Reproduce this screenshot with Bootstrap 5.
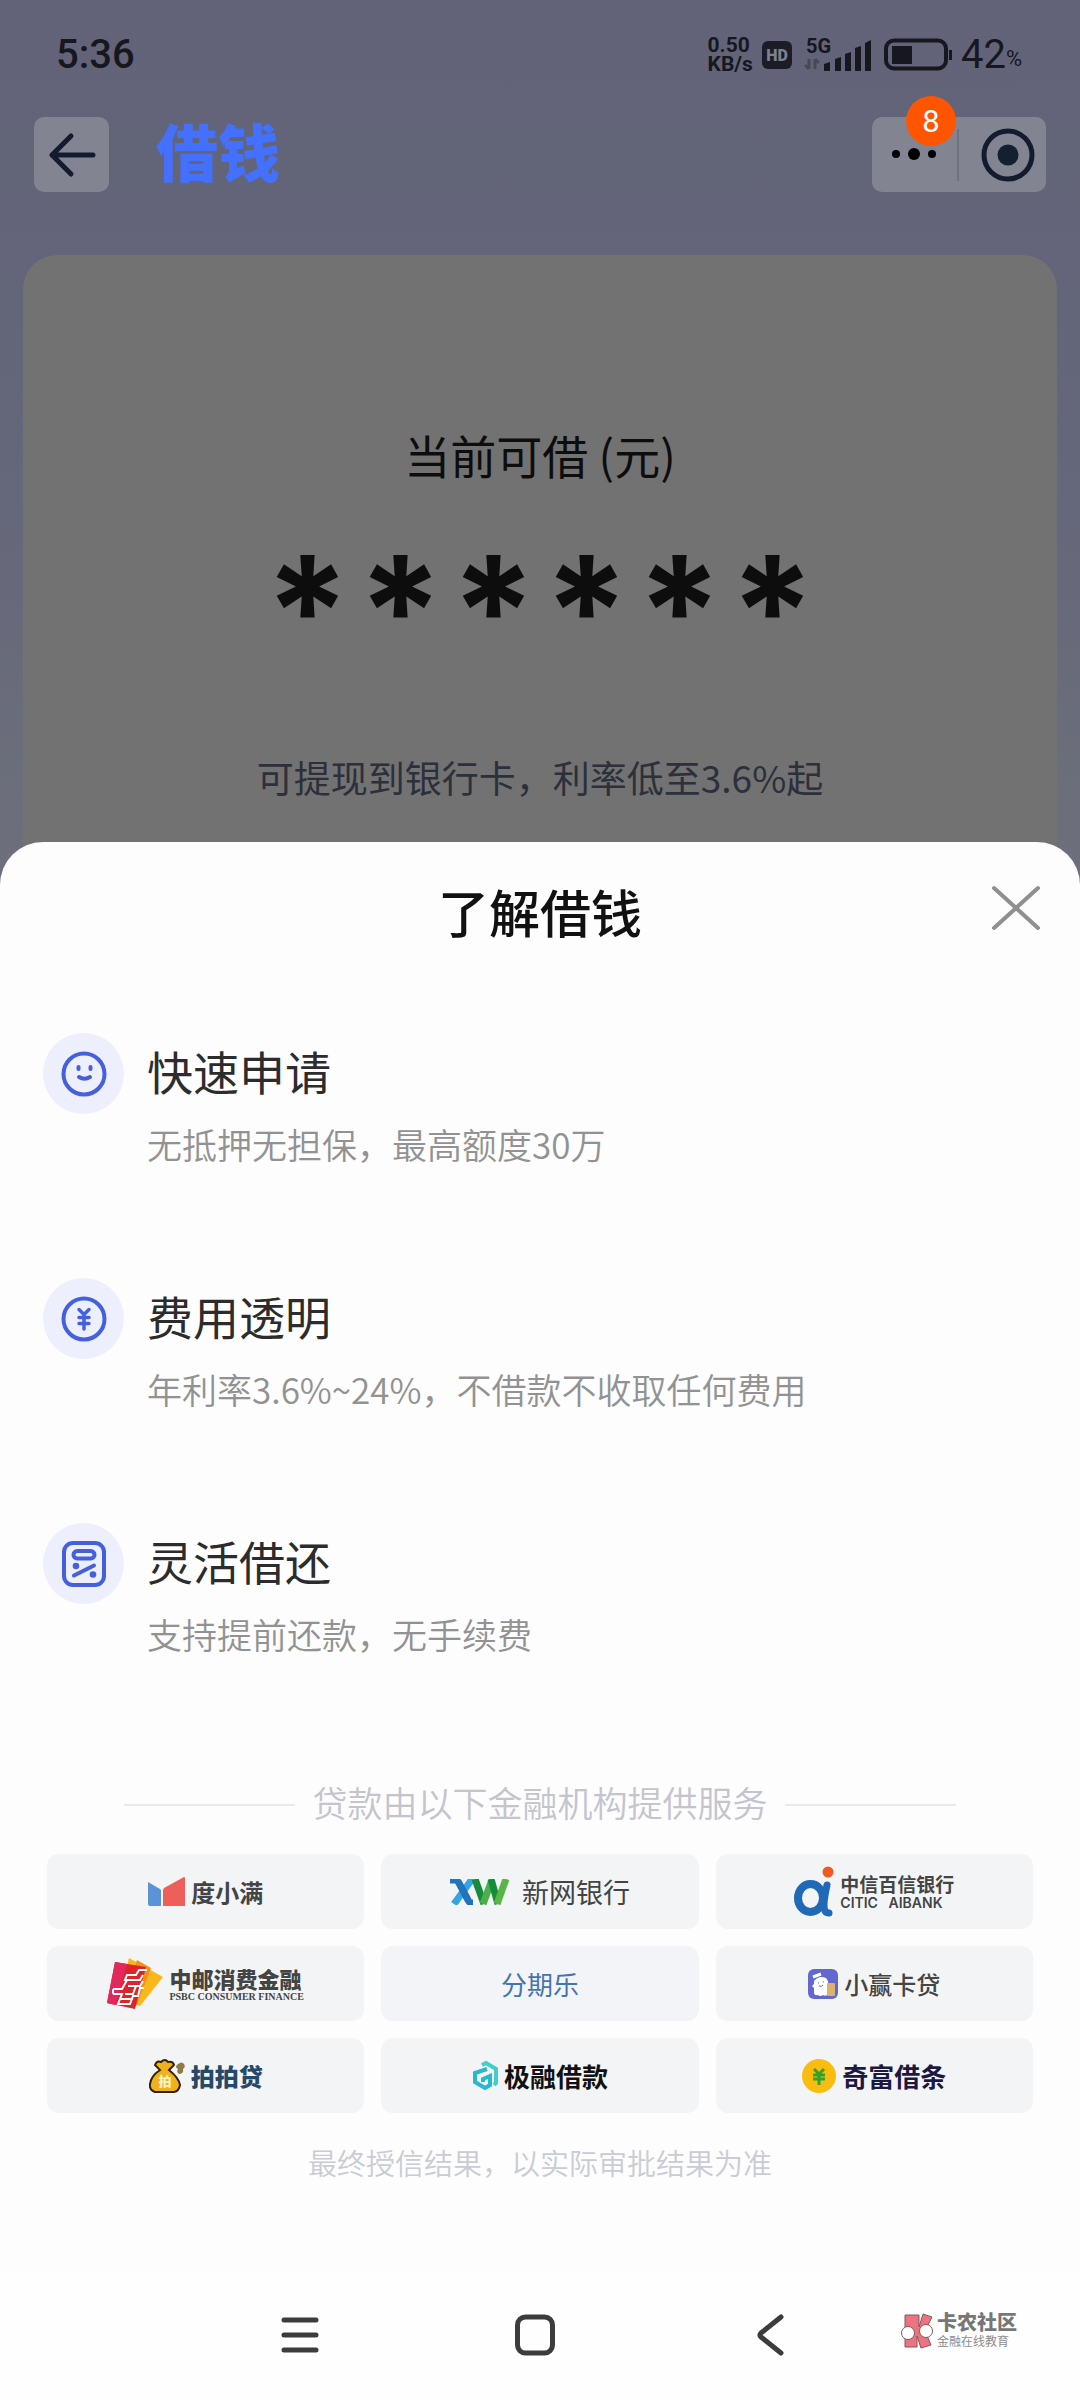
<!DOCTYPE html>
<html lang="zh-CN">
<head>
<meta charset="utf-8">
<meta name="viewport" content="width=device-width, initial-scale=1">
<title>借钱</title>
<link href="https://cdn.jsdelivr.net/npm/bootstrap@5.3.0/dist/css/bootstrap.min.css" rel="stylesheet">
<style>
  body { font-family: "Noto Sans CJK SC", "Noto Sans", sans-serif; background: #6b6e7b; color: #0d0d0d; }
  svg { display: block; flex: none; }
  .screen { min-height: 100vh; }
  .hero { background: linear-gradient(#626378, #64667a 50%, #6d707b); }
  .ink { color: #16171f; font-family: Roboto, "Noto Sans", sans-serif; }
  .statusbar { height: 86px; padding: 23px 58px 0 56px; }
  .clock { font-size: 40px; line-height: 64px; font-weight: 500; }
  .netrate { font-size: 21px; line-height: 19px; font-weight: 700; }
  .netrate span { display: block; }
  .pct { font-size: 22px; line-height: 28px; }
  .batt-num { font-size: 40px; line-height: 64px; }
  .topbar { padding: 31px 34px 0; }
  .glass { background: #828492; border: 0; border-radius: 10px; height: 75px; }
  .glass-back { width: 75px; padding: 0; }
  .glass button { background: none; border: 0; padding: 0; }
  .brand-title { font-size: 62px; line-height: 67px; padding-bottom: 8px; font-weight: 900; color: #4470ff; margin-left: 47px; }
  .split { width: 2px; height: 52px; background: #6f717f; }
  .count { position: absolute; left: 34px; top: -21px; width: 50px; height: 50px; border-radius: 50%; background: #ff5500; color: #fff; font-size: 31px; line-height: 51px; font-family: Roboto, sans-serif; }
  .quota { margin: 63px 23px 0; padding: 169px 20px 84px; border-radius: 34px 34px 0 0; background: #727272; }
  .quota-label { font-size: 46px; line-height: 60px; }
  .quota-mask { height: 268px; font-family: Inter, sans-serif; font-weight: 700; font-size: 153px; line-height: 254px; }
  .quota-mask span { width: 93px; display: flex; justify-content: center; }
  .quota-note { font-size: 37px; line-height: 50px; color: #2c303b; }
  .sheet { background: #fdfdfd; border-radius: 43px 43px 0 0; margin-top: -44px; padding: 34px 43px 0; position: relative; }
  .sheet-title { font-size: 51px; line-height: 70px; font-weight: 500; color: #111; }
  .close-btn { position: absolute; right: 39px; top: 43px; background: none; border: 0; padding: 0; }
  .feature-list { margin-top: 87px; gap: 109px; }
  .feature { gap: 23px; }
  .feature h2 { font-size: 46px; line-height: 60px; font-weight: 400; color: #2c2c2c; margin: 7px 0 19px; }
  .feature p { font-size: 35px; line-height: 50px; color: #929292; font-weight: 350; }
  .disc { width: 81px; height: 81px; border-radius: 50%; background: #eeeffc; }
  .by-line { margin-top: 118px; gap: 17px; font-size: 35px; line-height: 50px; font-weight: 350; color: #c3c4cd; }
  .by-line i { width: 171px; height: 2px; margin-top: 5px; background: #e9e9ec; }
  .partners { --bs-gutter-x: 17px; --bs-gutter-y: 17px; margin-top: 10px; }
  .tile { height: 75px; gap: 6px; border-radius: 12px; background: #f3f4f6; color: #444; text-decoration: none; line-height: 28px; font-weight: 700; }
  .t24 { font-size: 24px; }
  .t26 { font-size: 26px; }
  .t27 { font-size: 27px; }
  .tile-wide { gap: 13px; }
  .citic-cn { font-size: 19px; line-height: 22px; }
  .citic-en { font: 600 14px/16px Inter, sans-serif; white-space: pre; }
  .psbc-cn { font-size: 22px; line-height: 26px; font-weight: 900; }
  .psbc-en { font: 700 10px/12px "Liberation Serif", serif; }
  .tile-fen { background: #f2f4f8; color: #4674b0; }
  .tile-pai { color: #24496b; font-weight: 900; }
  .tile-ji { color: #111; }
  .tile-qi { color: #1d1840; }
  .final-note { margin-top: 29px; font-size: 29px; line-height: 40px; font-weight: 350; color: #c8ccd4; }
  .navkeys { height: 130px; background: #fefefe; }
  .navkeys button { background: none; border: 0; padding: 0; width: 235px; }
  .keys-pad { width: 182px; }
  .wm { gap: 3px; color: #777; margin-top: -8px; margin-right: 63px; }
  .wm b { font-size: 20px; line-height: 20px; font-weight: 900; }
  .wm span { font-size: 12px; line-height: 18px; color: #8c8c8c; }
</style>
</head>
<body>
<main class="screen d-flex flex-column">
  <div class="hero">
    <div class="statusbar ink d-flex justify-content-between align-items-start">
      <div class="clock">5:36</div>
      <div class="d-flex align-items-center">
        <div class="netrate"><span>0.50</span><span>KB/s</span></div>
        <svg class="ms-2" width="32" height="64" viewBox="0 0 32 64"><rect x="1" y="18" width="30" height="28" rx="6" fill="#1b1c25"/><text x="16" y="38" text-anchor="middle" font-size="16" font-weight="900" fill="#7e8090">HD</text></svg>
        <svg class="ms-2" width="72" height="64" viewBox="0 0 72 64" fill="#16171f"><text x="5" y="30" font-size="20" font-weight="700">5G</text><path d="M8 36v10M8 46l-4-4M14 46V36M14 36l4 4" stroke="#474957" stroke-width="3" fill="none"/><path d="M23 41l6-2v9h-6zM34 36l6-2v14h-6zM44 31l6-2v19h-6zM54 25l6-2v25h-6zM64 20l6-3v31h-6z"/></svg>
        <svg class="ms-2" width="72" height="64" viewBox="0 0 72 64"><rect x="5" y="17.500" width="60" height="28" rx="8" fill="none" stroke="#16171f" stroke-width="4"/><rect x="11" y="23" width="20" height="18" fill="#16171f"/><rect x="68" y="27" width="3" height="10" fill="#16171f"/></svg>
        <div class="d-flex align-items-center ms-2"><span class="batt-num">42</span><span class="pct pt-2">%</span></div>
      </div>
    </div>

    <header class="topbar d-flex align-items-center">
      <button type="button" class="glass glass-back d-flex align-items-center justify-content-center" aria-label="返回">
        <svg width="48" height="46" viewBox="0 0 48 46" fill="none" stroke="#141b2e" stroke-width="5" stroke-linecap="round" stroke-linejoin="round"><path d="M45 23H4M23 4L4 23l19 19"/></svg>
      </button>
      <h1 class="brand-title mb-0">借钱</h1>
      <div class="glass d-flex align-items-center ms-auto">
        <button type="button" class="position-relative" aria-label="更多">
          <svg width="85" height="75" viewBox="0 0 85 75"><circle cx="24" cy="37" r="4"/><circle cx="42" cy="37" r="6"/><circle cx="60" cy="37" r="4"/></svg>
          <span class="count">8</span>
        </button>
        <div class="split"></div>
        <button type="button" aria-label="关闭小程序">
          <svg width="87" height="75" viewBox="0 0 87 75"><circle cx="49" cy="38" r="24" fill="none" stroke="#141b2e" stroke-width="5"/><circle cx="49" cy="38" r="10.500" fill="#13202f"/></svg>
        </button>
      </div>
    </header>

    <section class="quota text-center">
      <div class="quota-label">当前可借 (元)</div>
      <div class="quota-mask d-flex justify-content-center"><span>*</span><span>*</span><span>*</span><span>*</span><span>*</span><span>*</span></div>
      <div class="quota-note">可提现到银行卡，利率低至3.6%起</div>
    </section>
  </div>

  <section class="sheet flex-grow-1">
    <div class="sheet-title text-center">了解借钱</div>
    <button type="button" class="close-btn" aria-label="关闭"><svg width="50" height="46" viewBox="0 0 50 46" stroke="#8f8f8f" stroke-width="4" stroke-linecap="round"><path d="M3 3l44 40M47 3L3 43"/></svg></button>

    <div class="feature-list d-flex flex-column">
      <div class="feature d-flex align-items-start">
        <div class="disc d-flex align-items-center justify-content-center"><svg width="48" height="48" viewBox="0 0 48 48" fill="none" stroke="#4560dc" stroke-width="4" stroke-linecap="round"><circle cx="24" cy="24" r="20.500"/><path d="M18.500 17v2M30.500 17v2M19 27q5.500 3.500 11 0"/></svg></div>
        <div><h2>快速申请</h2><p class="mb-0">无抵押无担保，最高额度30万</p></div>
      </div>
      <div class="feature d-flex align-items-start">
        <div class="disc d-flex align-items-center justify-content-center"><svg width="48" height="48" viewBox="0 0 48 48" fill="none" stroke="#4560dc" stroke-width="4" stroke-linecap="round"><circle cx="24" cy="24" r="20.500"/><path d="M19 14.500l5 5 5-5M24 20v14M19 22.500h10M19 28.500h10" stroke-width="3.500"/></svg></div>
        <div><h2>费用透明</h2><p class="mb-0">年利率3.6%~24%，不借款不收取任何费用</p></div>
      </div>
      <div class="feature d-flex align-items-start">
        <div class="disc d-flex align-items-center justify-content-center"><svg width="48" height="48" viewBox="0 0 48 48" fill="none" stroke="#4560dc" stroke-width="4" stroke-linecap="round"><rect x="4" y="3" width="40" height="42" rx="9"/><rect x="13.500" y="11" width="21" height="7.500" rx="3.700"/><path d="M14 35.500L34 25.500"/><circle cx="16" cy="26" r="3.300" fill="#4560dc" stroke="none"/><circle cx="33" cy="34.500" r="3.300" fill="#4560dc" stroke="none"/></svg></div>
        <div><h2>灵活借还</h2><p class="mb-0">支持提前还款，无手续费</p></div>
      </div>
    </div>

    <div class="by-line d-flex align-items-center justify-content-center"><i></i><span>贷款由以下金融机构提供服务</span><i></i></div>

    <div class="px-1">
    <div class="row partners">
      <div class="col-4"><a href="#" class="tile t24 d-flex align-items-center justify-content-center">
        <svg width="37" height="30" viewBox="0 0 37 30"><path d="M0 5l12 7 1 1v16H2q-2 0-2-2z" fill="#5b93d6"/><path d="M15 13l1-2L36 0q1 0 1 1v28H15z" fill="#ee5f5b"/></svg><span>度小满</span></a></div>
      <div class="col-4"><a href="#" class="tile tile-wide t27 fw-normal d-flex align-items-center justify-content-center">
        <svg width="59" height="26" viewBox="0 0 59 26" fill="none" stroke-width="7"><path d="M4 25L20 3q1-2 4-2" stroke="#35a4e4"/><path d="M0 1h5q2 0 4 3l9 17q1 3 5 3" stroke="#2273bd"/><path d="M25 0l9 25" stroke="#158c3c"/><path d="M33 25L42 1" stroke="#4cb04a"/><path d="M41 0l7 25" stroke="#158c3c"/><path d="M47 25L56 0" stroke="#5bb447"/></svg><span>新网银行</span></a></div>
      <div class="col-4"><a href="#" class="tile d-flex align-items-center justify-content-center">
        <svg width="40" height="58" viewBox="0 0 40 58" fill="none" stroke="#1f69b7" stroke-linecap="round"><ellipse cx="16.500" cy="35" rx="12.500" ry="14" stroke-width="8"/><path d="M33 22q-3 14-3 20 0 8 5 8" stroke-width="7"/><circle cx="34" cy="9" r="5.500" fill="#ee5a22" stroke="none"/></svg>
        <span><span class="d-block citic-cn">中信百信银行</span><span class="d-block citic-en">CITIC   AIBANK</span></span></a></div>

      <div class="col-4"><a href="#" class="tile d-flex align-items-center justify-content-center">
        <svg width="56" height="52" viewBox="0 0 56 52"><path d="M22 0l34 19-23 29-20-8z" fill="#f8b81c"/><path d="M30 2l14 8-14 37-14-5z" fill="#f39018"/><path d="M8 4l31 5-11 42L0 45z" fill="#dd2529"/><path d="M8 4l12 2L8 47l-8-2z" fill="#e3285e"/><path d="M40 12h-8l-3 5h-9l-2 5h15l3-5M20 22l-5 9h-9M6 36h9l-4 10h12l3-8h5l2-8h4M6 31v5M21 28h12l3-5M18 36h8l3-8M14 41h12" fill="none" stroke="#fff" stroke-width="2"/></svg>
        <span><span class="d-block psbc-cn">中邮消费金融</span><span class="d-block psbc-en">PSBC CONSUMER FINANCE</span></span></a></div>
      <div class="col-4"><a href="#" class="tile tile-fen t26 d-flex align-items-center justify-content-center fw-normal"><span>分期乐</span></a></div>
      <div class="col-4"><a href="#" class="tile t24 d-flex align-items-center justify-content-center fw-medium">
        <svg width="30" height="30" viewBox="0 0 30 30"><rect width="30" height="30" rx="6" fill="#6368d0"/><path d="M6 12q5-6 12-3 3 3 2 8v8q-2 3-5 1-3 2-5 0-4 1-4-3l0-4-2-2 2-2z" fill="#fff"/><path d="M5 8l8-3" stroke="#fff" stroke-width="3"/><rect x="19" y="14" width="8" height="13" rx="1" fill="#dcb26c"/><path d="M10 14h1M15 13h1M11 17q3 1 4-1" stroke="#6368d0" fill="none"/></svg><span>小赢卡贷</span></a></div>

      <div class="col-4"><a href="#" class="tile tile-pai t24 d-flex align-items-center justify-content-center">
        <svg width="36" height="34" viewBox="0 0 36 34"><path d="M29 5q4-3 6 0t-1 5q1 5-4 5-3-2-1-5-4-2 0-5z" fill="#8d7a48"/><path d="M6 6q2-5 6-3 4-4 7 0 5-1 6 3l-5 5q10 8 11 15-1 6-6 7H6q-6-2-5-8 1-8 10-14z" fill="#efb21c" stroke="#31220c" stroke-width="2"/><text x="16" y="27" text-anchor="middle" font-size="13" fill="#fff3c4">拍</text></svg><span>拍拍贷</span></a></div>
      <div class="col-4"><a href="#" class="tile tile-ji t26 d-flex align-items-center justify-content-center">
        <svg width="26" height="30" viewBox="0 0 26 30" fill="none" stroke-width="4"><path d="M15 8L3 12v9l10 6 5-3v-9l-7 3v3" stroke="#27b9cf"/><path d="M10 4l4-2 10 6v14l-2 2" stroke="#45cdc8"/></svg><span>极融借款</span></a></div>
      <div class="col-4"><a href="#" class="tile tile-qi t26 d-flex align-items-center justify-content-center">
        <svg width="34" height="34" viewBox="0 0 34 34"><circle cx="17" cy="17" r="17" fill="#fbbc12"/><path d="M12 10l5 5 5-5M17 15v11M11 16h12M11 20h12" fill="none" stroke="#31a22a" stroke-width="3"/></svg><span>奇富借条</span></a></div>
    </div>
    </div>

    <p class="final-note text-center mb-0">最终授信结果，以实际审批结果为准</p>
  </section>

  <nav class="navkeys d-flex align-items-center">
    <div class="keys-pad"></div>
    <button type="button" aria-label="最近任务"><svg class="mx-auto" width="38" height="40" viewBox="0 0 38 40" stroke="#3c3c3c" stroke-width="5" stroke-linecap="round"><path d="M3 5h32M3 20h32M3 35h32"/></svg></button>
    <button type="button" aria-label="主屏幕"><svg class="mx-auto" width="42" height="42" viewBox="0 0 42 42"><rect x="3.500" y="3" width="35" height="36" rx="8" fill="none" stroke="#3c3c3c" stroke-width="5"/></svg></button>
    <button type="button" aria-label="返回上一页"><svg class="mx-auto" width="28" height="42" viewBox="0 0 28 42" fill="none" stroke="#3c3c3c" stroke-width="5" stroke-linecap="round" stroke-linejoin="round"><path d="M25 3L5 19q-2 2 0 4l20 16"/></svg></button>
    <div class="wm d-flex align-items-center ms-auto">
      <svg width="34" height="36" viewBox="0 0 34 36" fill="#ee7380" stroke="#7d5a5f"><path d="M5 2h14v12l4-13 9 3-7 14 6 14-10 3-4-12v11H5z"/><circle cx="8" cy="20" r="6.500" fill="#fff"/><circle cx="26" cy="18" r="6.500" fill="#fff"/></svg>
      <div class="d-flex flex-column"><b>卡农社区</b><span>金融在线教育</span></div>
    </div>
  </nav>
</main>
<script src="https://cdn.jsdelivr.net/npm/bootstrap@5.3.0/dist/js/bootstrap.bundle.min.js"></script>
</body>
</html>
